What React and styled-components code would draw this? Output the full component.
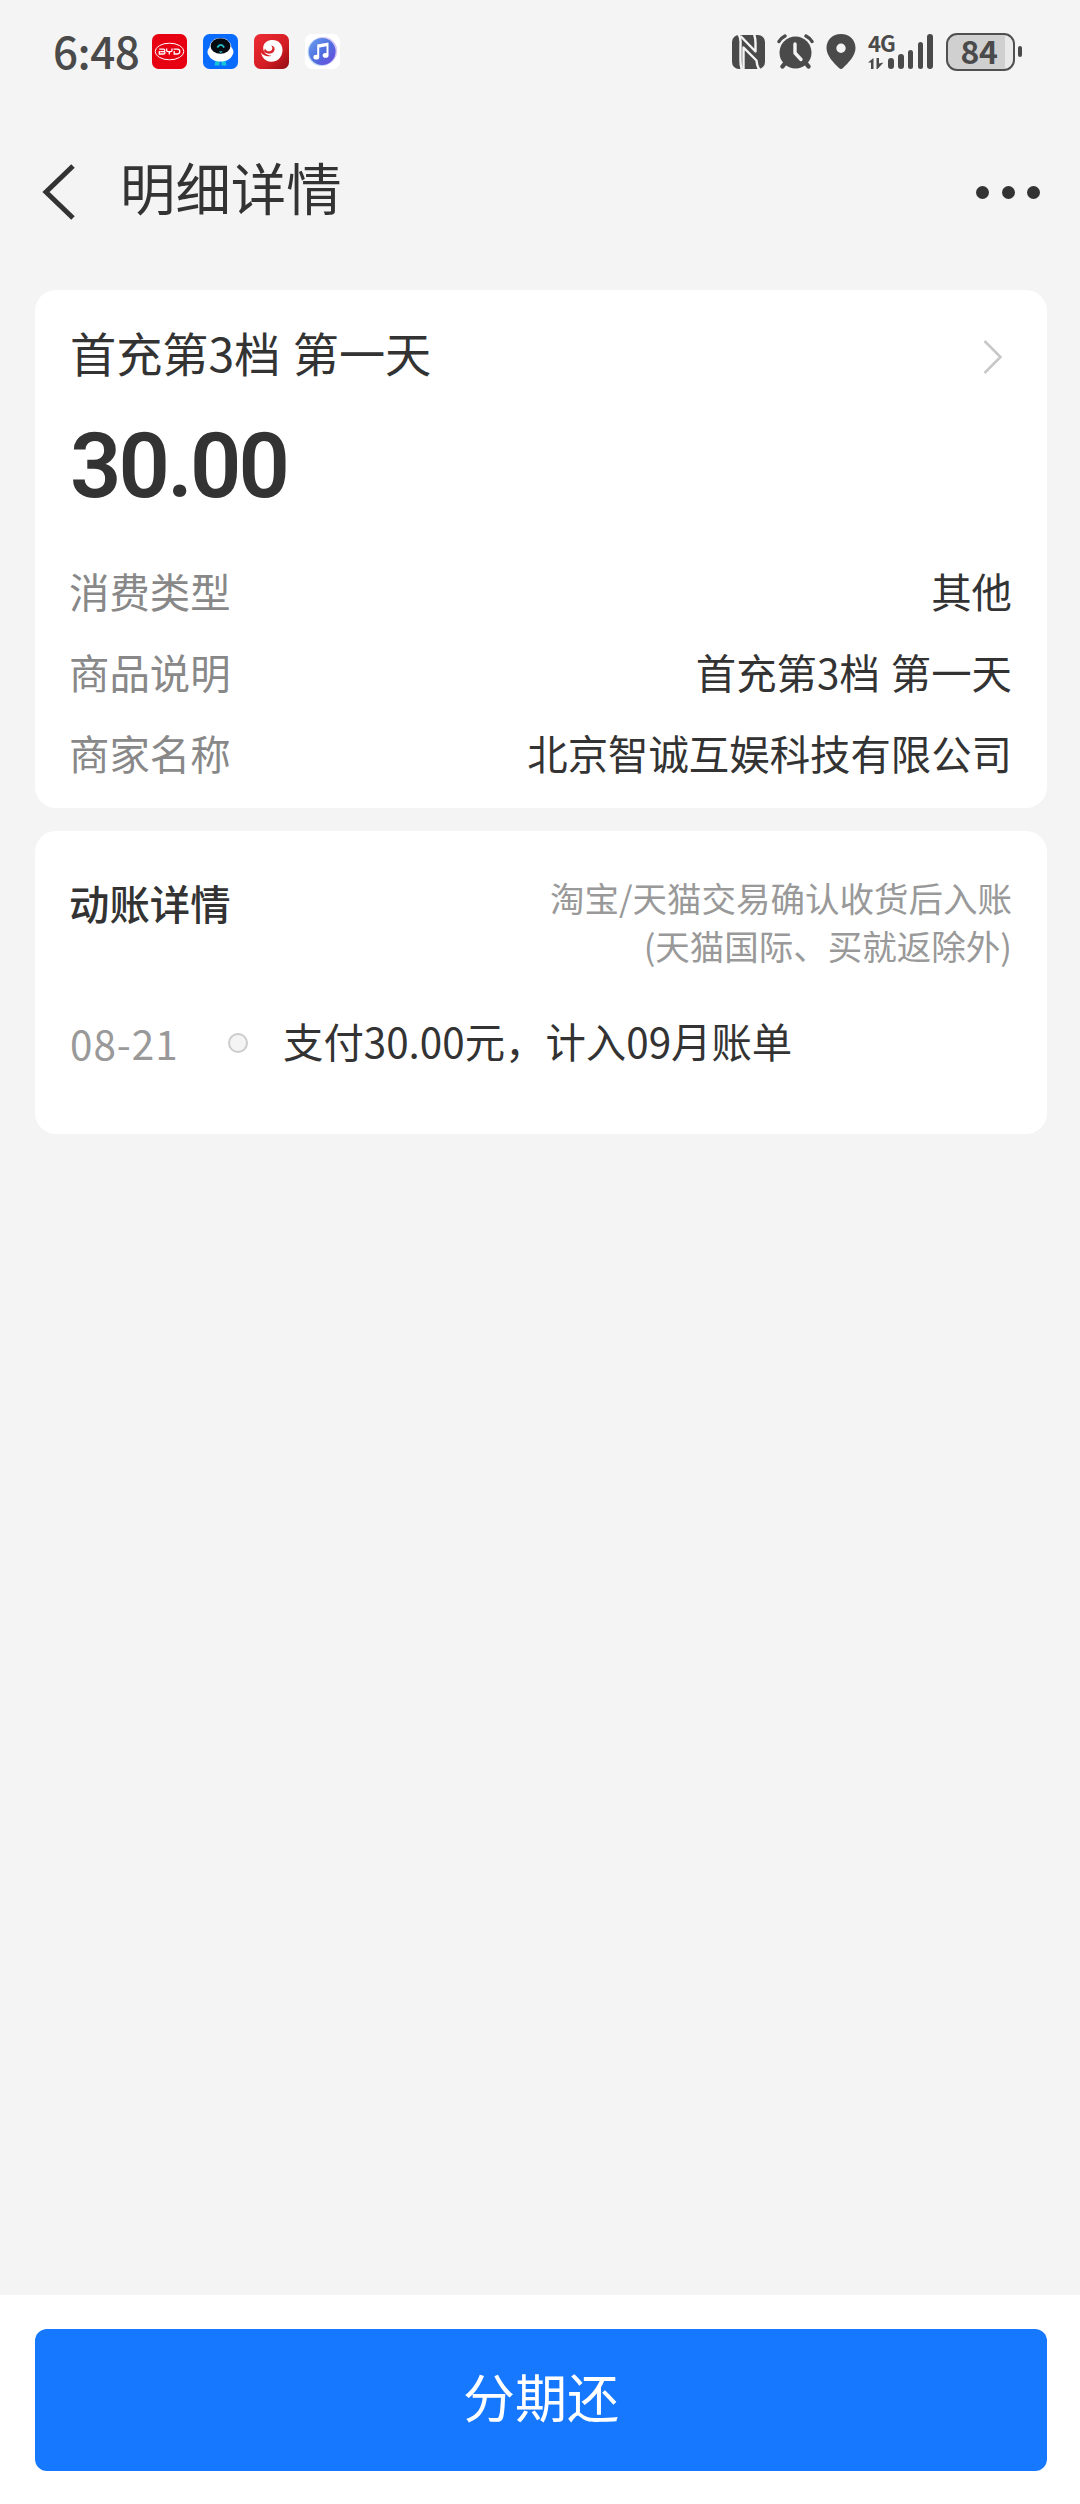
import React from "react";
import styled, { createGlobalStyle } from "styled-components";

const details = [
  { label: "消费类型", value: "其他" },
  { label: "商品说明", value: "首充第3档 第一天" },
  { label: "商家名称", value: "北京智诚互娱科技有限公司" },
];

export default function App() {
  return (
    <Page>
      <GlobalStyle />
      <StatusBar />
      <Header>
        <BackIcon viewBox="0 0 34 56">
          <path d="M32 2L5 28L32 54" />
        </BackIcon>
        <PageTitle>明细详情</PageTitle>
        <MoreButton>
          <MoreDot />
          <MoreDot />
          <MoreDot />
        </MoreButton>
      </Header>
      <Content>
        <SummaryCard>
          <TitleRow>
            <ProductTitle>首充第3档 第一天</ProductTitle>
            <ArrowIcon viewBox="0 0 20 34">
              <path d="M1.5 1L17.5 17L1.5 33" />
            </ArrowIcon>
          </TitleRow>
          <Amount>30.00</Amount>
          {details.map((item) => (
            <DetailRow key={item.label}>
              <Label>{item.label}</Label>
              <Value>{item.value}</Value>
            </DetailRow>
          ))}
        </SummaryCard>
        <RecordCard>
          <RecordHead>
            <RecordTitle>动账详情</RecordTitle>
            <RecordNote>
              淘宝/天猫交易确认收货后入账
              <br />
              (天猫国际、买就返除外)
            </RecordNote>
          </RecordHead>
          <RecordRow>
            <RecordDate>08-21</RecordDate>
            <RecordDot />
            <Value>支付30.00元，计入09月账单</Value>
          </RecordRow>
        </RecordCard>
      </Content>
      <Footer>
        <PayButton>分期还</PayButton>
      </Footer>
    </Page>
  );
}

function StatusBar() {
  return (
    <StatusWrapper>
      <Time>6:48</Time>
      <AppIcons>
        <BydIcon />
        <RobotIcon />
        <NineIcon />
        <MusicIcon />
      </AppIcons>
      <StatusIcons>
        <NfcIcon />
        <AlarmIcon />
        <PinIcon />
        <Network>
          <NetworkType>
            4G
            <svg width="16" height="11" viewBox="0 0 16 11">
              <path d="M5.5 0V11H3V4.5H0zM8.5 0H11V5.5L15.5 4.5L9.5 11H8.5z" fill="#4a4a4a" />
            </svg>
          </NetworkType>
          <Bar $h={11} />
          <Bar $h={15} />
          <Bar $h={19} />
          <Bar $h={27} />
          <Bar $h={35} />
        </Network>
        <Battery>84</Battery>
        <BatteryTip />
      </StatusIcons>
    </StatusWrapper>
  );
}

function BydIcon() {
  return (
    <svg width="35" height="35" viewBox="0 0 35 35">
      <rect width="35" height="35" rx="6.5" fill="#e60012" />
      <ellipse cx="17.5" cy="17.5" rx="14.3" ry="8.3" fill="none" stroke="#fff" strokeWidth="1" />
      <g fill="none" stroke="#fff" strokeWidth="1.3">
        <path d="M7.3 15.2H11.5Q12.8 15.2 12.8 16.4T11.5 17.6H8.2M11.5 17.6Q13 17.6 13 18.8T11.5 20H7.3V17" />
        <path d="M14.6 14.5V16.2Q14.6 17.6 16 17.6H18.6Q20 17.6 20 16.2V14.5M17.3 17.6V20.6" />
        <path d="M21.6 15.2H25.5Q27.8 15.2 27.8 17.6T25.5 20H22.2V17" />
      </g>
    </svg>
  );
}

function RobotIcon() {
  return (
    <svg width="35" height="35" viewBox="0 0 35 35">
      <rect width="35" height="35" rx="6.5" fill="#0a6cff" />
      <path d="M12.5 27H16.5V31.5H11.5zM18.5 27H22.5L23.5 31.5H18.5z" fill="#18c4d8" />
      <path
        d="M17.5 4C25 4 28 8.5 28.5 13.5C31 16 30.8 19.5 29.5 21C27.5 25.5 23 27.5 17.5 27.5S7.5 25.5 5.5 21C4.2 19.5 4 16 6.5 13.5C7 8.5 10 4 17.5 4z"
        fill="#fff"
      />
      <ellipse cx="17.5" cy="12" rx="10" ry="7.8" fill="#060b12" />
      <path d="M14.3 13.5Q17.8 8.2 21.2 13.5" fill="none" stroke="#22c7cf" strokeWidth="1.8" />
      <path d="M16 17.2H19.5L17.8 19.2z" fill="#22c7cf" />
    </svg>
  );
}

function NineIcon() {
  return (
    <svg width="35" height="35" viewBox="0 0 35 35">
      <defs>
        <linearGradient id="nine" x1="0" y1="0" x2="1" y2="1">
          <stop offset="0" stopColor="#ee2c34" />
          <stop offset="0.6" stopColor="#d31c24" />
          <stop offset="1" stopColor="#8f0d12" />
        </linearGradient>
      </defs>
      <rect width="35" height="35" rx="6.5" fill="url(#nine)" />
      <path
        d="M17.5 6C24.5 5.5 29 10.5 28.5 17C28 23.8 23 28 17 27.8C11.5 27.5 7.8 23.5 7 18.5C9.5 22 13.5 23 17.5 21.7C12.5 21.5 9.2 18.5 9.2 14C9.2 9.5 12.8 6.3 17.5 6z"
        fill="#fff"
      />
      <path d="M10 17.5C12.5 20 17 20.5 19.5 18C21.8 15.5 20.5 11.5 17 11.5C19 13 18.8 16 16.5 17C14.3 17.9 12 17 11 14.5C10.5 15.5 10.2 16.5 10 17.5z" fill="#d9242c" />
    </svg>
  );
}

function MusicIcon() {
  return (
    <svg width="35" height="35" viewBox="0 0 35 35">
      <defs>
        <linearGradient id="music" x1="0" y1="0" x2="1" y2="1">
          <stop offset="0" stopColor="#6fa0ee" />
          <stop offset="0.5" stopColor="#4d6fdf" />
          <stop offset="1" stopColor="#7049dd" />
        </linearGradient>
      </defs>
      <rect width="35" height="35" rx="6.5" fill="#fff" />
      <circle cx="18.2" cy="17" r="14" fill="#d9c4f5" />
      <circle cx="16.6" cy="18" r="14" fill="#b9d3f8" />
      <circle cx="17.2" cy="17.5" r="13.4" fill="url(#music)" />
      <path d="M13.2 23V11.4L22.5 9.6V20.8M13.2 12.8L22.5 11" fill="none" stroke="#fff" strokeWidth="2" />
      <ellipse cx="11.3" cy="23.2" rx="2.9" ry="2.4" fill="#fff" />
      <ellipse cx="20.6" cy="21.4" rx="2.9" ry="2.4" fill="#fff" />
    </svg>
  );
}

function NfcIcon() {
  return (
    <svg width="33" height="34" viewBox="0 0 33 34">
      <rect width="33" height="34" rx="7" fill="#4a4a4a" />
      <g fill="none" stroke="#f4f4f4" strokeWidth="2.4" strokeLinejoin="round">
        <path d="M6.5 -1Q9 3 8.5 9V26Q8.5 31 10 35" />
        <path d="M8.5 1L23.5 16.5V8Q23.5 3 22 -1" />
        <path d="M11.5 35V12.5L24.5 25.5Q24.8 31 27.5 35" />
      </g>
    </svg>
  );
}

function AlarmIcon() {
  return (
    <svg width="37" height="35" viewBox="0 0 37 35">
      <g stroke="#4a4a4a" strokeLinecap="round" fill="none">
        <path d="M2 7.5Q4 4 8 2M35 7.5Q33 4 29 2" strokeWidth="3.4" />
        <path d="M9 28L5.5 32.5M28 28L31.5 32.5" strokeWidth="4.4" />
      </g>
      <circle cx="18.5" cy="18.5" r="16" fill="#4a4a4a" />
      <path
        d="M18 10V19L24 25.5"
        fill="none"
        stroke="#f4f4f4"
        strokeWidth="3.4"
        strokeLinecap="round"
        strokeLinejoin="round"
      />
    </svg>
  );
}

function PinIcon() {
  return (
    <svg width="30" height="35" viewBox="0 0 30 35">
      <path
        d="M15 0C23.5 0 29.5 6 29.5 14C29.5 22 22 29 17 34Q15 35.8 13 34C8 29 .5 22 .5 14C.5 6 6.5 0 15 0zM15 9.5A4.7 4.7 0 1 0 15 18.9A4.7 4.7 0 1 0 15 9.5z"
        fill="#4a4a4a"
        fillRule="evenodd"
      />
    </svg>
  );
}

const GlobalStyle = createGlobalStyle`
  body {
    margin: 0;
    background: #f4f4f4;
  }
  * {
    box-sizing: border-box;
  }
  svg {
    display: block;
    flex: none;
  }
`;

const Page = styled.div`
  width: 1080px;
  height: 2504px;
  display: flex;
  flex-direction: column;
  background: #f4f4f4;
  color: #333;
  font-family: "Noto Sans CJK SC", sans-serif;
  white-space: nowrap;
`;

const StatusWrapper = styled.div`
  height: 104px;
  padding: 0 58px 0 53px;
  display: flex;
  align-items: center;
  color: #4a4a4a;
`;

const Time = styled.div`
  width: 99px;
  font-size: 44px;
  font-weight: 500;
  line-height: 50px;
  letter-spacing: -0.5px;
  margin-bottom: 5px;
`;

const AppIcons = styled.div`
  display: flex;
  gap: 16px;
  margin-bottom: 1px;
`;

const StatusIcons = styled.div`
  display: flex;
  align-items: center;
  height: 38px;
  margin-left: auto;
  margin-bottom: 1px;

  > svg + svg {
    margin-left: 12px;
  }
`;

const Network = styled.div`
  display: flex;
  align-items: flex-end;
  gap: 4.2px;
  height: 35px;
  margin-left: 12px;
`;

const NetworkType = styled.div`
  width: 16px;
  height: 35px;
  display: flex;
  flex-direction: column;
  justify-content: space-between;
  font-size: 22px;
  font-weight: 700;
  line-height: 16px;
  letter-spacing: -1px;
`;

const Bar = styled.div`
  width: 5.6px;
  height: ${(props) => props.$h}px;
  border-radius: 3px;
  background: #4a4a4a;
`;

const Battery = styled.div`
  width: 69px;
  height: 38px;
  margin-left: 13px;
  padding-right: 3px;
  border: 2.5px solid #505050;
  border-radius: 11px;
  background: linear-gradient(to right, #d0d0d0 57px, #e9e9e9 57px);
  font-size: 32px;
  font-weight: 700;
  line-height: 31px;
  letter-spacing: -0.5px;
  text-align: center;
`;

const BatteryTip = styled.div`
  width: 4px;
  height: 11px;
  margin-left: 3px;
  border-radius: 2px;
  background: #4a4a4a;
`;

const Header = styled.div`
  height: 174px;
  padding: 0 40px 0 42px;
  display: flex;
  align-items: center;
`;

const BackIcon = styled.svg`
  width: 34px;
  height: 56px;
  margin: 2px 0 0 -1px;
  fill: none;
  stroke: #333;
  stroke-width: 5;
`;

const PageTitle = styled.div`
  margin: 0 auto 10px 45px;
  font-size: 55.4px;
  line-height: 70px;
`;

const MoreButton = styled.div`
  display: flex;
  gap: 12.5px;
  margin-top: 2px;
`;

const MoreDot = styled.div`
  width: 13px;
  height: 13px;
  border-radius: 50%;
  background: #333;
`;

const Content = styled.div`
  flex: 1;
  padding: 12px 33px 0 35px;
`;

const Card = styled.div`
  border-radius: 21px;
  background: #fff;
`;

const SummaryCard = styled(Card)`
  height: 518px;
  padding: 33px 35px 0;
`;

const RecordCard = styled(Card)`
  height: 303px;
  margin-top: 23px;
  padding: 42px 35px 0;
`;

const TitleRow = styled.div`
  height: 57px;
  display: flex;
  justify-content: space-between;
`;

const ProductTitle = styled.div`
  font-size: 46.2px;
  line-height: 57px;
  word-spacing: 2px;
`;

const ArrowIcon = styled.svg`
  width: 20px;
  height: 34px;
  margin: 17px 9px 0 0;
  fill: none;
  stroke: #c8c8c8;
  stroke-width: 2.6;
`;

const Amount = styled.div`
  margin: 42px 0 38px;
  font-family: Roboto, sans-serif;
  font-size: 90px;
  font-weight: 600;
  line-height: 90px;
  letter-spacing: -2.8px;
`;

const DetailRow = styled.div`
  display: flex;
  justify-content: space-between;
  font-size: 40.4px;
  line-height: 81.2px;
`;

const Label = styled.div`
  margin-left: -1px;
  color: #888;
`;

const Value = styled.div`
  color: #333;
  font-size: 40.4px;
  word-spacing: 2px;
`;

const RecordHead = styled.div`
  height: 96px;
  display: flex;
  justify-content: space-between;
`;

const RecordTitle = styled.div`
  margin-left: -1px;
  padding-top: 6px;
  font-size: 40.4px;
  font-weight: 500;
  line-height: 48px;
`;

const RecordNote = styled.div`
  color: #999;
  font-size: 34.5px;
  line-height: 48px;
  text-align: right;
`;

const RecordRow = styled.div`
  display: flex;
  align-items: center;
  height: 81px;
  margin-top: 31px;
  line-height: 81px;
`;

const RecordDate = styled.div`
  width: 158px;
  padding-top: 4px;
  color: #999;
  font-size: 40.4px;
  letter-spacing: 1px;
`;

const RecordDot = styled.div`
  width: 20px;
  height: 20px;
  margin: 4px 35px 0 0;
  border: 2.5px solid #ccc;
  border-radius: 50%;
  background: #f4f4f4;
`;

const Footer = styled.div`
  height: 209px;
  padding: 34px 33px 33px 35px;
  background: #fff;
`;

const PayButton = styled.div`
  height: 142px;
  border-radius: 12px;
  background: #1677ff;
  color: #fff;
  font-size: 52px;
  line-height: 133px;
  text-align: center;
`;
